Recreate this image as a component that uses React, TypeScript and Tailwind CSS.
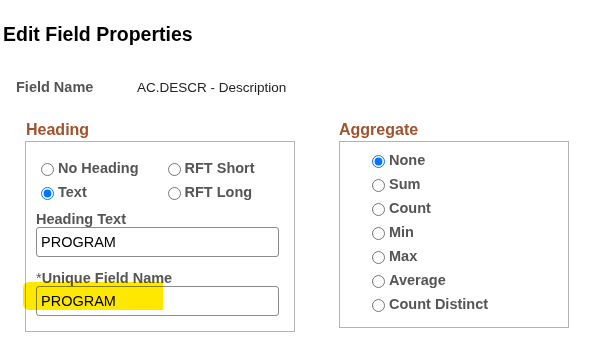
import { useState } from "react";

const headingOptions = [
  ["No Heading", "RFT Short"],
  ["Text", "RFT Long"],
];

const aggregateOptions = ["None", "Sum", "Count", "Min", "Max", "Average", "Count Distinct"];

const RadioLabel = ({ name, label, checked, onChange }: { name: string; label: string; checked: boolean; onChange: () => void }) => (
  <label className="flex items-center h-[24px] font-bold text-[14.5px] text-[#555555] cursor-pointer">
    <input type="radio" name={name} checked={checked} onChange={onChange} className="m-0 w-[13px] h-[13px] accent-[#0075ff]" />
    <span className="ml-[4px]">{label}</span>
  </label>
);

const App = () => {
  const [heading, setHeading] = useState("Text");
  const [aggregate, setAggregate] = useState("None");

  return (
    <div className="w-[609px] h-[349px] bg-white font-['Liberation_Sans',Arial,sans-serif] text-[#333333]">
      <div className="pl-[3px] pt-[23px] text-[19.5px] leading-[22px] font-bold text-black">Edit Field Properties</div>

      <div className="flex items-center pl-[16px] mt-[33px] h-[20px]">
        <span className="w-[121px] font-bold text-[14.5px] text-[#555555]">Field Name</span>
        <span className="text-[13.5px] text-[#222222]">AC.DESCR - Description</span>
      </div>

      <div className="flex mt-[22px]">
        {/* Heading */}
        <div className="ml-[25px] w-[270px]">
          <div className="text-[16px] leading-[20px] font-bold text-[#a0522d] pl-[1px]">Heading</div>
          <div className="mt-[1px] border border-[#b3b3b3] h-[191px] pl-[14px] pt-[15px]">
            <div className="pl-[1px]">
              {headingOptions.map((row, i) => (
                <div key={i} className="flex">
                  {row.map((opt) => (
                    <div key={opt} className="w-[127px]">
                      <RadioLabel name="heading" label={opt} checked={heading === opt} onChange={() => setHeading(opt)} />
                    </div>
                  ))}
                </div>
              ))}
            </div>
            <div className="mt-[6px] text-[14.5px] leading-[16px] font-bold text-[#555555] -ml-[4px]">Heading Text</div>
            <input
              defaultValue="PROGRAM"
              className="block -ml-[4px] w-[243px] h-[30px] border border-[#8a8a8a] rounded-[3px] px-[4px] text-[14.5px] text-black"
            />
            <div className="mt-[13px] text-[14.5px] leading-[16px] font-bold text-[#555555] -ml-[4px]">
              <span className="font-normal">*</span>Unique Field Name
            </div>
            <div className="relative -ml-[4px] w-[243px]">
              <input
                defaultValue="PROGRAM"
                className="block w-[243px] h-[30px] border border-[#8a8a8a] rounded-[3px] px-[4px] text-[14.5px] text-black"
              />
              <div className="absolute left-[-13px] top-[-4px] w-[140px] h-[28px] bg-[#ffe800] mix-blend-multiply rounded-l-[6px] pointer-events-none" />
            </div>
          </div>
        </div>

        {/* Aggregate */}
        <div className="ml-[44px] w-[230px]">
          <div className="text-[16px] leading-[20px] font-bold text-[#a0522d]">Aggregate</div>
          <div className="mt-[1px] border border-[#b3b3b3] h-[187px] pl-[32px] pt-[7px]">
            {aggregateOptions.map((opt) => (
              <RadioLabel key={opt} name="aggregate" label={opt} checked={aggregate === opt} onChange={() => setAggregate(opt)} />
            ))}
          </div>
        </div>
      </div>
    </div>
  );
};

export default App;
